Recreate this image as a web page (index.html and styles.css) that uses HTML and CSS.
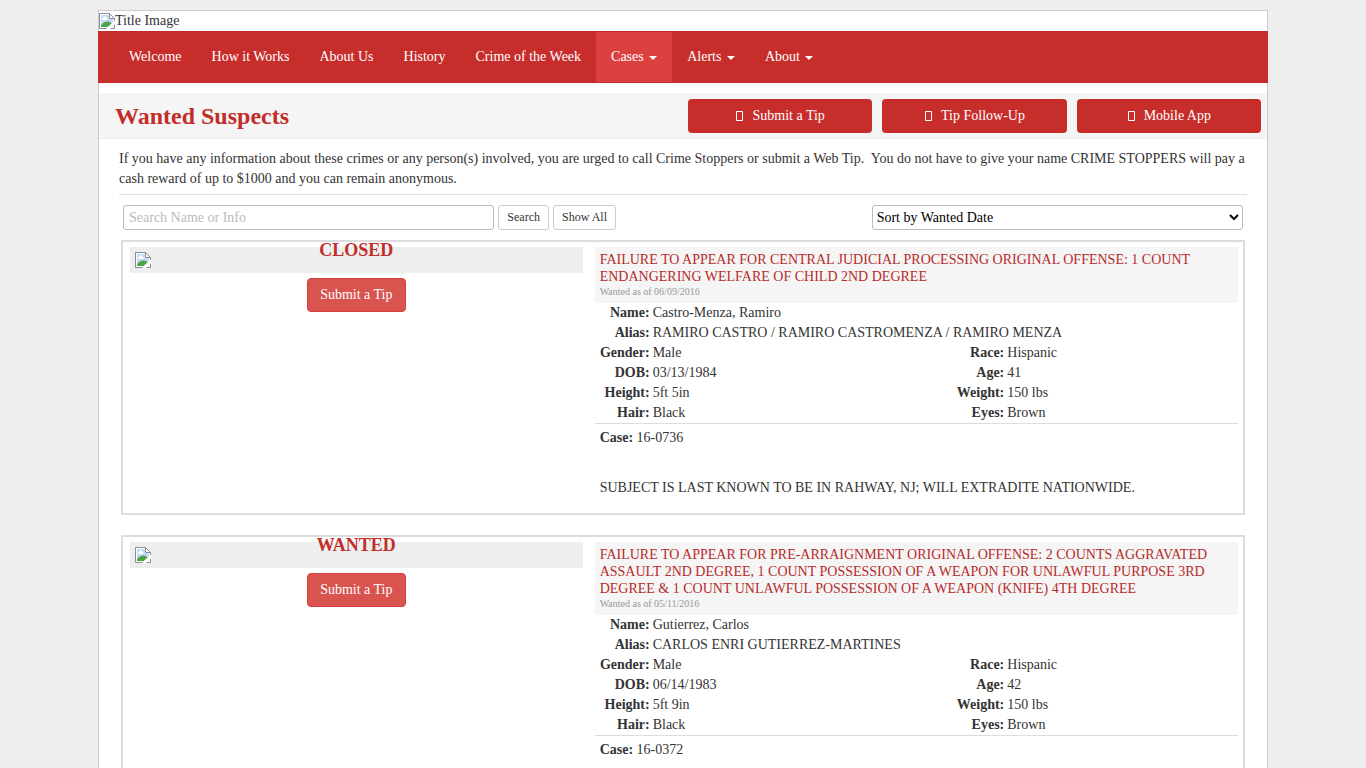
FILE: index.html
```html
<!DOCTYPE html>
<html lang="en">
<head>
<meta charset="utf-8">
<title>Wanted Suspects</title>
<meta name="viewport" content="width=device-width, initial-scale=1">
<link rel="stylesheet" href="styles.css">
</head>
<body>
<svg class="defs" aria-hidden="true">
  <symbol id="missing" viewBox="0 0 16 16">
    <path d="M.5.5h10l5 5v10H.5z" fill="#fff"/>
    <path d="M2 2h8v4h4v8H2z" fill="#c3d9f8"/>
    <path d="M4 7c-1.500 0-1.300-2 0-2 .3-2 3-2 3.300-.3C9 4.500 9 7 7.500 7z" fill="#fff"/>
    <path d="M2 14v-1.500C4 9 9 7.500 11.500 9.500L14 12v2z" fill="#4da445"/>
    <path d="M15.500 15.500v-10l-5-5H.5v15zM10.500.5v5h5" fill="none" stroke="#8a8d98"/>
    <path d="M16 7.500 7.500 15v1H11l5-4.500z" fill="#fff"/>
  </symbol>
  <symbol id="box" viewBox="0 0 8 10"><path d="M1.500.5h6v9h-6z" fill="none" stroke="#fff"/></symbol>
</svg>
<div class="page">
  <header>
    <div class="banner"><svg class="missing"><use href="#missing"/></svg><span>Title Image</span></div>
    <nav class="nav">
      <a href="#">Welcome</a>
      <a href="#">How it Works</a>
      <a href="#">About Us</a>
      <a href="#">History</a>
      <a href="#">Crime of the Week</a>
      <a href="#" class="active">Cases <span class="caret"></span></a>
      <a href="#">Alerts <span class="caret"></span></a>
      <a href="#">About <span class="caret"></span></a>
    </nav>
  </header>
  <div class="titlebar">
    <h1>Wanted Suspects</h1>
    <div class="actions">
      <a class="action" href="#"><svg class="box"><use href="#box"/></svg>Submit a Tip</a>
      <a class="action" href="#"><svg class="box"><use href="#box"/></svg>Tip Follow-Up</a>
      <a class="action" href="#"><svg class="box"><use href="#box"/></svg>Mobile App</a>
    </div>
  </div>
  <main class="content">
    <p class="intro">If you have any information about these crimes or any person(s) involved, you are urged to call Crime Stoppers or submit a Web Tip.&nbsp; You do not have to give your name CRIME STOPPERS will pay a cash reward of up to $1000 and you can remain anonymous.</p>
    <form class="filters">
      <input class="search" type="text" placeholder="Search Name or Info" aria-label="Search Name or Info">
      <button class="small" type="button">Search</button>
      <button class="small" type="button">Show All</button>
      <select class="sort" aria-label="Sort order"><option>Sort by Wanted Date</option></select>
    </form>

    <article class="card">
      <div class="photo">
        <div class="frame"><svg class="missing"><use href="#missing"/></svg></div>
        <strong class="status">CLOSED</strong>
        <button class="tip" type="button">Submit a Tip</button>
      </div>
      <div class="info">
        <div class="offense">
          <h2>FAILURE TO APPEAR FOR CENTRAL JUDICIAL PROCESSING ORIGINAL OFFENSE: 1 COUNT ENDANGERING WELFARE OF CHILD 2ND DEGREE</h2>
          <small>Wanted as of 06/09/2016</small>
        </div>
        <dl class="facts">
          <dt>Name:</dt><dd class="wide">Castro-Menza, Ramiro</dd>
          <dt>Alias:</dt><dd class="wide">RAMIRO CASTRO / RAMIRO CASTROMENZA / RAMIRO MENZA</dd>
          <dt>Gender:</dt><dd>Male</dd><dt>Race:</dt><dd>Hispanic</dd>
          <dt>DOB:</dt><dd>03/13/1984</dd><dt>Age:</dt><dd>41</dd>
          <dt>Height:</dt><dd>5ft 5in</dd><dt>Weight:</dt><dd>150 lbs</dd>
          <dt>Hair:</dt><dd>Black</dd><dt>Eyes:</dt><dd>Brown</dd>
        </dl>
        <div class="case">
          <p><b>Case:</b> 16-0736</p>
          <p class="note">SUBJECT IS LAST KNOWN TO BE IN RAHWAY, NJ; WILL EXTRADITE NATIONWIDE.</p>
        </div>
      </div>
    </article>

    <article class="card">
      <div class="photo">
        <div class="frame"><svg class="missing"><use href="#missing"/></svg></div>
        <strong class="status">WANTED</strong>
        <button class="tip" type="button">Submit a Tip</button>
      </div>
      <div class="info">
        <div class="offense">
          <h2>FAILURE TO APPEAR FOR PRE-ARRAIGNMENT ORIGINAL OFFENSE: 2 COUNTS AGGRAVATED ASSAULT 2ND DEGREE, 1 COUNT POSSESSION OF A WEAPON FOR UNLAWFUL PURPOSE 3RD DEGREE &amp; 1 COUNT UNLAWFUL POSSESSION OF A WEAPON (KNIFE) 4TH DEGREE</h2>
          <small>Wanted as of 05/11/2016</small>
        </div>
        <dl class="facts">
          <dt>Name:</dt><dd class="wide">Gutierrez, Carlos</dd>
          <dt>Alias:</dt><dd class="wide">CARLOS ENRI GUTIERREZ-MARTINES</dd>
          <dt>Gender:</dt><dd>Male</dd><dt>Race:</dt><dd>Hispanic</dd>
          <dt>DOB:</dt><dd>06/14/1983</dd><dt>Age:</dt><dd>42</dd>
          <dt>Height:</dt><dd>5ft 9in</dd><dt>Weight:</dt><dd>150 lbs</dd>
          <dt>Hair:</dt><dd>Black</dd><dt>Eyes:</dt><dd>Brown</dd>
        </dl>
        <div class="case">
          <p><b>Case:</b> 16-0372</p>
        </div>
      </div>
    </article>
  </main>
</div>
</body>
</html>
```
FILE: styles.css
```css
* { box-sizing: border-box; }
html { scrollbar-width: none; }
body {
  margin: 0;
  padding: 10px 0 0;
  background: #eee;
  color: #333;
  font: 14px/20px "Liberation Serif", "Times New Roman", serif;
}
h1, h2, p, dl, dd { margin: 0; }
a { text-decoration: none; }
button, input, select { font-family: inherit; }
.defs { display: none; }

.page {
  max-width: 1170px;
  margin: 0 auto;
  background: #fff;
  border: 1px solid #ccc;
}
.missing { display: block; width: 16px; height: 16px; }
.banner { display: flex; align-items: center; height: 20px; }
.nav {
  display: flex;
  flex-wrap: wrap;
  margin: 0 -1px;
  padding: 0 16px;
  background: #c72d2b;
  border: 1px solid #c02a28;
  border-width: 1px 0;
}
.nav a { padding: 15px; color: #fff; }
.nav .active { background: #dc4140; }
.caret {
  display: inline-block;
  margin-left: 2px;
  vertical-align: middle;
  border: 4px solid transparent;
  border-top-color: #fff;
  border-bottom: 0;
}

.titlebar {
  display: grid;
  grid-template-columns: 1fr 1fr;
  align-items: center;
  margin-top: 10px;
  padding: 6px 0 5px;
  background: #f5f5f5;
  border-bottom: 1px solid #eee;
}
h1 { padding-left: 16px; font-size: 24px; line-height: 30px; color: #c12e2a; }
.actions { display: grid; grid-template-columns: repeat(3, 1fr); gap: 10px; padding: 0 6px 0 5px; }
.action {
  display: flex;
  align-items: center;
  justify-content: center;
  gap: 9px;
  padding: 7px 12px;
  color: #fff;
  background: #c72d2b;
  border-radius: 4px;
}
.box { width: 8px; height: 10px; }

.content { padding: 10px 20px 20px; }
.intro { padding-bottom: 5px; border-bottom: 1px solid #ddd; }
.filters { display: flex; gap: 4px; padding: 10px 4px; }
.search, .sort, .small {
  height: 25px;
  border: 1px solid #bbb;
  border-radius: 3px;
  background: #fff;
}
.search, .sort { flex: 0 1 calc(100% / 3 - 2px); min-width: 0; font-size: 14px; color: #000; }
.search { padding: 0 5px; }
.search::placeholder { color: #bbb; }
.sort { margin-left: auto; padding: 0; }
.small { padding: 0 8px; font-size: 12px; color: #333; border-color: #ccc; }

.card {
  display: grid;
  grid-template-columns: 5fr 7fr;
  margin: 0 2px 20px;
  padding: 5px 0 15px;
  border: 2px solid #ddd;
}
.photo { position: relative; padding: 0 7px; text-align: center; }
.frame { padding: 5px; background: #eee; }
.status {
  position: absolute;
  top: -7px;
  left: 0;
  right: 0;
  font-size: 18px;
  color: #c12e2a;
}
.tip {
  margin-top: 5px;
  padding: 6px 12px;
  font-size: 14px;
  line-height: 20px;
  color: #fff;
  background: #d9534f;
  border: 1px solid #d43f3a;
  border-radius: 4px;
}
.info { padding: 0 5px; }
.offense { padding: 4px 5px 5px; background: #f5f5f5; }
h2 { font-size: 14px; line-height: 17px; font-weight: normal; color: #b52b2b; }
small { display: block; font-size: 10px; line-height: 13px; color: #999; }
.facts {
  display: grid;
  grid-template-columns: 55px 14fr 55px 11fr;
  column-gap: 3px;
  border-bottom: 1px solid #ddd;
}
dt { text-align: right; font-weight: bold; }
.wide { grid-column: span 3; }
.case { padding: 4px 5px 0; }
.note { margin-top: 30px; }
```
